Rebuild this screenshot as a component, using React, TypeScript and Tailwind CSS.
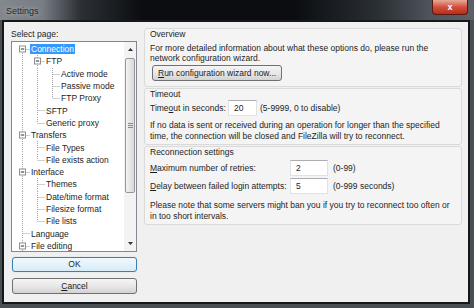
import React from 'react';

type TreeRow = {
  label: string;
  depth: number;
  expander?: boolean;
  first?: boolean;
  last?: boolean;
  selected?: boolean;
};

const rows: TreeRow[] = [
  { label: 'Connection', depth: 0, expander: true, first: true, selected: true },
  { label: 'FTP', depth: 1, expander: true },
  { label: 'Active mode', depth: 2 },
  { label: 'Passive mode', depth: 2 },
  { label: 'FTP Proxy', depth: 2, last: true },
  { label: 'SFTP', depth: 1 },
  { label: 'Generic proxy', depth: 1, last: true },
  { label: 'Transfers', depth: 0, expander: true },
  { label: 'File Types', depth: 1 },
  { label: 'File exists action', depth: 1, last: true },
  { label: 'Interface', depth: 0, expander: true },
  { label: 'Themes', depth: 1 },
  { label: 'Date/time format', depth: 1 },
  { label: 'Filesize format', depth: 1 },
  { label: 'File lists', depth: 1, last: true },
  { label: 'Language', depth: 0 },
  { label: 'File editing', depth: 0, expander: true },
];

const LINE = '#a3a3a3';

function Guide() {
  return (
    <svg width="15" height="12.3" className="block shrink-0">
      <line x1="7.5" y1="0" x2="7.5" y2="12.3" stroke={LINE} strokeDasharray="1 1" />
    </svg>
  );
}

function Connector({ row }: { row: TreeRow }) {
  return (
    <svg width="15" height="12.3" className="block shrink-0">
      {!row.first && <line x1="7.5" y1="0" x2="7.5" y2="6" stroke={LINE} strokeDasharray="1 1" />}
      {!row.last && <line x1="7.5" y1="6" x2="7.5" y2="12.3" stroke={LINE} strokeDasharray="1 1" />}
      <line x1="7.5" y1="6.5" x2="15" y2="6.5" stroke={LINE} strokeDasharray="1 1" />
      {row.expander && (
        <>
          <rect x="4.5" y="3" width="6" height="6" fill="#fff" stroke="#8e8f8f" />
          <line x1="5.8" y1="6" x2="9.2" y2="6" stroke="#2a2a2a" />
        </>
      )}
    </svg>
  );
}

function Tree() {
  return (
    <div className="flex h-[211px] border border-[#828790] bg-white">
      <div className="flex-1 overflow-hidden pl-[3px] pt-[1px]">
        {rows.map((r) => (
          <div key={r.label} className="flex h-[12.3px] items-center">
            {Array.from({ length: r.depth }).map((_, i) => (
              <Guide key={i} />
            ))}
            <Connector row={r} />
            <span
              className={`whitespace-nowrap px-[1px] leading-[10px] ${r.selected ? 'bg-[#3399ff] text-white' : ''}`}
            >
              {r.label}
            </span>
          </div>
        ))}
      </div>
      {/* scrollbar */}
      <div className="flex w-[12px] flex-col bg-[#f3f3f3]">
        <div className="flex h-[15px] items-center justify-center">
          <svg width="5" height="3"><path d="M0 3 L2.5 0 L5 3 Z" fill="#333" /></svg>
        </div>
        <div className="mx-[1px] mt-[1px] flex h-[135px] items-center justify-center rounded-[2px] border border-[#979797] bg-linear-to-r from-[#f3f3f3] to-[#d9d9d9]">
          <div className="flex flex-col gap-[1px]">
            <div className="h-[1px] w-[5px] bg-[#8a8a8a]" />
            <div className="h-[1px] w-[5px] bg-[#8a8a8a]" />
            <div className="h-[1px] w-[5px] bg-[#8a8a8a]" />
          </div>
        </div>
        <div className="flex-1" />
        <div className="flex h-[15px] items-center justify-center">
          <svg width="5" height="3"><path d="M0 0 L2.5 3 L5 0 Z" fill="#333" /></svg>
        </div>
      </div>
    </div>
  );
}

function Group({ title, children, className = '' }: { title: string; children: React.ReactNode; className?: string }) {
  return (
    <div className={`rounded-[3px] border border-[#dadada] bg-[#f4f4f4] px-[5px] ${className}`}>
      <div className="leading-[10px]">{title}</div>
      {children}
    </div>
  );
}

function Field({ value, width }: { value: string; width: string }) {
  return (
    <div className={`${width} flex h-[16px] items-center border border-[#dfe3e8] border-t-[#abadb3] bg-white pl-[5px]`}>
      {value}
    </div>
  );
}

export default function App() {
  return (
    <div className="flex h-[308px] w-[474px] flex-col bg-[#4a4f54] font-['Liberation_Sans',Arial,sans-serif] text-[8.5px] text-[#1e1e1e]">
      {/* title bar */}
      <div className="flex h-[20px] shrink-0 items-start justify-between bg-[linear-gradient(90deg,#82888e_0%,#777d83_9%,#2c3035_17%,#0b0d10_30%,#0b0d10_62%,#2b3035_80%,#4f555b_91%,#5b6167_100%)]">
        <span className="ml-[6px] mt-[6px] text-[9px] leading-[10px] text-[#262626] [text-shadow:0_0_4px_#c8cdd2]">Settings</span>
        <div className="mr-[6px] flex h-[15px] w-[36px] items-center justify-center rounded-b-[4px] border border-t-0 border-[#5a1a10] bg-linear-to-b from-[#e7a999] via-[#d0503b] to-[#b92a1a]">
          <span className="text-[9px] font-bold leading-none text-white">x</span>
        </div>
      </div>

      {/* client */}
      <div className="mb-[4px] ml-[2px] mr-[4px] flex flex-1 border-2 border-[#15181b] bg-[#f0f0f0]">
        {/* left column */}
        <div className="ml-[7px] flex w-[126px] flex-col pt-[7px]">
          <div className="leading-[10px]">Select page:</div>
          <div className="mt-[2px]">
            <Tree />
          </div>
          <div className="ml-[1px] mt-[5px] flex h-[15px] items-center justify-center rounded-[3px] border border-[#3c7fb1] bg-linear-to-b from-[#f1f8fd] to-[#d7ecf8] shadow-[0_0_1px_#8fcff3]">
            OK
          </div>
          <div className="ml-[1px] mt-[6px] flex h-[16px] items-center justify-center rounded-[3px] border border-[#707070] bg-linear-to-b from-[#f5f5f5] via-[#e8e8e8] to-[#d3d3d3]">
            <span><span className="underline">C</span>ancel</span>
          </div>
        </div>

        {/* right column */}
        <div className="ml-[7px] mr-[6px] flex flex-1 flex-col pt-[6px]">
          <Group title="Overview" className="pb-[5px]">
            <div className="mt-[4px] leading-[10px]">
              For more detailed information about what these options do, please run the
              <br />
              network configuration wizard.
            </div>
            <div className="mt-[2px] flex">
              <div className="ml-[2px] flex h-[16px] items-center rounded-[3px] border border-[#707070] bg-linear-to-b from-[#f5f5f5] via-[#e8e8e8] to-[#d3d3d3] px-[5px]">
                <span><span className="underline">R</span>un configuration wizard now...</span>
              </div>
            </div>
          </Group>

          <Group title="Timeout" className="mt-[1px] pb-[3px]">
            <div className="mt-[1px] flex items-center">
              <span className="w-[78px]">Time<span className="underline">o</span>ut in seconds:</span>
              <Field value="20" width="w-[29px]" />
              <span className="ml-[3px]">(5-9999, 0 to disable)</span>
            </div>
            <div className="mt-[4px] leading-[10.5px]">
              If no data is sent or received during an operation for longer than the specified
              <br />
              time, the connection will be closed and FileZilla will try to reconnect.
            </div>
          </Group>

          <Group title="Reconnection settings" className="mt-[1px] pb-[3px]">
            <div className="mt-[3px] flex items-center">
              <span className="w-[140px]"><span className="underline">M</span>aximum number of retries:</span>
              <Field value="2" width="w-[38px]" />
              <span className="ml-[5px]">(0-99)</span>
            </div>
            <div className="mt-[2px] flex items-center">
              <span className="w-[140px]"><span className="underline">D</span>elay between failed login attempts:</span>
              <Field value="5" width="w-[38px]" />
              <span className="ml-[5px]">(0-999 seconds)</span>
            </div>
            <div className="mt-[6px] leading-[10.5px]">
              Please note that some servers might ban you if you try to reconnect too often or
              <br />
              in too short intervals.
            </div>
          </Group>
        </div>
      </div>
    </div>
  );
}
